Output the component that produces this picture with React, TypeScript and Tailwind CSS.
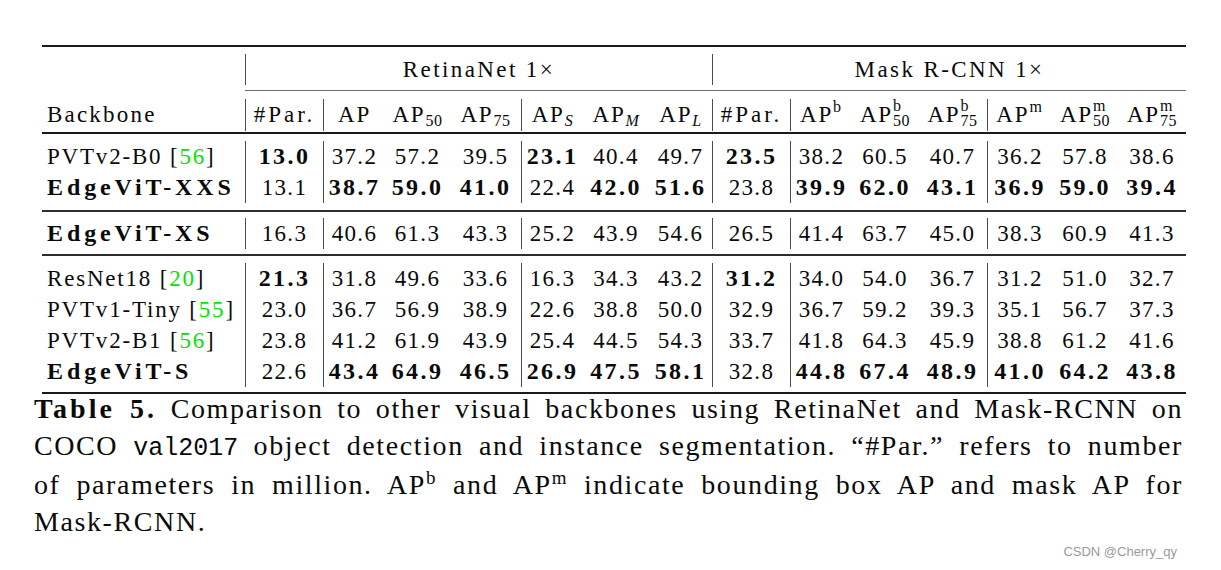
import clsx from "clsx";
import type { ReactNode } from "react";

const gridCols =
  "grid grid-cols-[203px_78px_62px_65px_71px_62px_66px_63px_78px_62px_66px_69px_65px_66px_68px]";
const vline = "border-l border-[#4d4d4d]";
const sepCols = new Set([1, 2, 5, 8, 9, 12]);

type Row = { name: string; cite?: string; strong?: boolean; values: string[] };

// "*" marks a bold value
const blocks: Row[][] = [
  [
    {
      name: "PVTv2-B0",
      cite: "56",
      values: ["*13.0", "37.2", "57.2", "39.5", "*23.1", "40.4", "49.7", "*23.5", "38.2", "60.5", "40.7", "36.2", "57.8", "38.6"],
    },
    {
      name: "EdgeViT-XXS",
      strong: true,
      values: ["13.1", "*38.7", "*59.0", "*41.0", "22.4", "*42.0", "*51.6", "23.8", "*39.9", "*62.0", "*43.1", "*36.9", "*59.0", "*39.4"],
    },
  ],
  [
    {
      name: "EdgeViT-XS",
      strong: true,
      values: ["16.3", "40.6", "61.3", "43.3", "25.2", "43.9", "54.6", "26.5", "41.4", "63.7", "45.0", "38.3", "60.9", "41.3"],
    },
  ],
  [
    {
      name: "ResNet18",
      cite: "20",
      values: ["*21.3", "31.8", "49.6", "33.6", "16.3", "34.3", "43.2", "*31.2", "34.0", "54.0", "36.7", "31.2", "51.0", "32.7"],
    },
    {
      name: "PVTv1-Tiny",
      cite: "55",
      values: ["23.0", "36.7", "56.9", "38.9", "22.6", "38.8", "50.0", "32.9", "36.7", "59.2", "39.3", "35.1", "56.7", "37.3"],
    },
    {
      name: "PVTv2-B1",
      cite: "56",
      values: ["23.8", "41.2", "61.9", "43.9", "25.4", "44.5", "54.3", "33.7", "41.8", "64.3", "45.9", "38.8", "61.2", "41.6"],
    },
    {
      name: "EdgeViT-S",
      strong: true,
      values: ["22.6", "*43.4", "*64.9", "*46.5", "*26.9", "*47.5", "*58.1", "32.8", "*44.8", "*67.4", "*48.9", "*41.0", "*64.2", "*43.8"],
    },
  ],
];

function Sub({ children, italic = false }: { children: ReactNode; italic?: boolean }) {
  return (
    <span className={clsx("relative top-[4px] text-[16px] leading-none tracking-[0.6px]", italic && "italic")}>
      {children}
    </span>
  );
}

function Sup({ children, className }: { children: ReactNode; className?: string }) {
  return <span className={clsx("relative -top-[10px] leading-none", className ?? "text-[16px]")}>{children}</span>;
}

function SupSub({ sup, sub }: { sup: string; sub: string }) {
  return (
    <span className="relative -top-[11px] inline-flex flex-col text-left text-[16px] leading-[15px] tracking-[0.6px]">
      <span>{sup}</span>
      <span>{sub}</span>
    </span>
  );
}

function Rule({ className }: { className: string }) {
  return <div className={className} />;
}

const headers: { label: ReactNode; sep?: boolean }[] = [
  { label: <span className="tracking-[3px]">#Par.</span>, sep: true },
  { label: "AP", sep: true },
  { label: <>AP<Sub>50</Sub></> },
  { label: <>AP<Sub>75</Sub></> },
  { label: <>AP<Sub italic>S</Sub></>, sep: true },
  { label: <>AP<Sub italic>M</Sub></> },
  { label: <>AP<Sub italic>L</Sub></> },
  { label: <span className="tracking-[3px]">#Par.</span>, sep: true },
  { label: <>AP<Sup>b</Sup></>, sep: true },
  { label: <>AP<SupSub sup="b" sub="50" /></> },
  { label: <>AP<SupSub sup="b" sub="75" /></> },
  { label: <>AP<Sup>m</Sup></>, sep: true },
  { label: <>AP<SupSub sup="m" sub="50" /></> },
  { label: <>AP<SupSub sup="m" sub="75" /></> },
];

function DataRow({ row }: { row: Row }) {
  return (
    <div className={gridCols}>
      <div
        className={clsx(
          "h-[31px] whitespace-nowrap pl-[5px] leading-[31px]",
          row.strong ? "text-[24px] font-bold tracking-[3.9px]" : "tracking-[1.8px]",
        )}
      >
        {row.name}
        {row.cite ? (
          <>
            {" "}[<span className="text-[#00e600]">{row.cite}</span>]
          </>
        ) : null}
      </div>
      {row.values.map((value, i) => {
        const bold = value.startsWith("*");
        return (
          <div
            key={i}
            className={clsx(
              "h-[31px] text-center leading-[31px]",
              sepCols.has(i + 1) && vline,
              bold ? "text-[24px] font-bold tracking-[2.4px]" : "tracking-[1.3px]",
            )}
          >
            {bold ? value.slice(1) : value}
          </div>
        );
      })}
    </div>
  );
}

export default function App() {
  return (
    <div className="h-[570px] w-[1221px] overflow-hidden bg-white pt-[45px] font-['Liberation_Serif',serif] text-[23px] text-[#0a0a0a]">
      <div className="ml-[42px] w-[1144px]">
        <Rule className="h-[2px] bg-[#1a1a1a]" />

        <div className={clsx(gridCols, "mt-[7px]")}>
          <div className="h-[31px]" />
          <div className={clsx("col-span-7 h-[31px] text-center leading-[31px] tracking-[2.4px]", vline)}>
            RetinaNet 1×
          </div>
          <div className={clsx("col-span-7 h-[31px] text-center leading-[31px] tracking-[2.4px]", vline)}>
            Mask R-CNN 1×
          </div>
        </div>

        <div className={clsx(gridCols, "mt-[5px]")}>
          <div className="col-start-2 col-span-14 h-[1px] bg-[#6a6a6a]" />
        </div>

        <div className={clsx(gridCols, "mt-[8px]")}>
          <div className="h-[32px] pl-[5px] leading-[32px] tracking-[2.2px]">Backbone</div>
          {headers.map((h, i) => (
            <div
              key={i}
              className={clsx("h-[32px] whitespace-nowrap text-center leading-[32px] tracking-[1.8px]", h.sep && vline)}
            >
              {h.label}
            </div>
          ))}
        </div>

        <Rule className="mt-[1px] h-[2px] bg-[#1a1a1a]" />

        <div className="mt-[7px]">
          {blocks[0].map((row) => (
            <DataRow key={row.name} row={row} />
          ))}
        </div>

        <Rule className="mt-[7px] h-[1.5px] bg-[#2e2e2e]" />

        <div className="mt-[6.5px]">
          {blocks[1].map((row) => (
            <DataRow key={row.name} row={row} />
          ))}
        </div>

        <Rule className="mt-[5px] h-[1.5px] bg-[#2e2e2e]" />

        <div className="mt-[7.5px]">
          {blocks[2].map((row) => (
            <DataRow key={row.name} row={row} />
          ))}
        </div>

        <Rule className="mt-[5px] h-[2px] bg-[#1a1a1a]" />
      </div>

      <div className="-mt-[3px] ml-[34px] w-[1149px] text-[28px] leading-[36.5px] tracking-[1.6px]">
        <div className="whitespace-nowrap text-justify [text-align-last:justify]">
          <span className="font-bold tracking-[3px]">Table 5.</span> Comparison to other visual backbones using RetinaNet
          and Mask-RCNN on
        </div>
        <div className="whitespace-nowrap text-justify [text-align-last:justify]">
          COCO <span className="font-['Liberation_Mono',monospace] text-[25px] tracking-[0px]">val2017</span> object
          detection and instance segmentation. “#Par.” refers to number
        </div>
        <div className="whitespace-nowrap text-justify [text-align-last:justify]">
          of parameters in million. AP<Sup className="text-[19px]">b</Sup> and AP<Sup className="text-[19px]">m</Sup>{" "}
          indicate bounding box AP and mask AP for
        </div>
        <div className="whitespace-nowrap">Mask-RCNN.</div>
      </div>

      <div className="mt-[4px] flex justify-end pr-[44px] font-['Liberation_Sans',Arial,sans-serif] text-[13px] leading-[16px] tracking-[0px] text-[#9a9a9a]">
        CSDN @Cherry_qy
      </div>
    </div>
  );
}
